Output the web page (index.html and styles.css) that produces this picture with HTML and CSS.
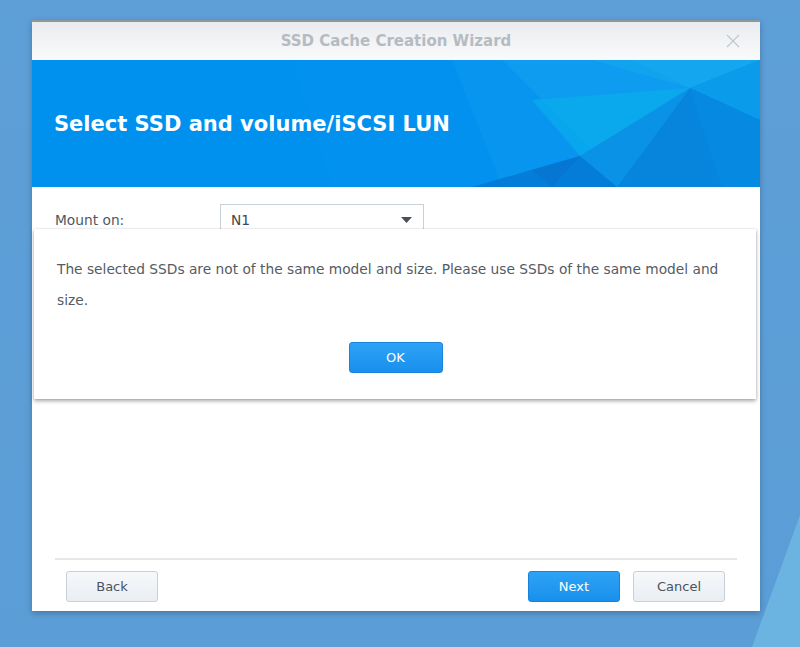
FILE: index.html
```html
<!DOCTYPE html>
<html>
<head>
<meta charset="utf-8">
<link rel="stylesheet" href="styles.css">
</head>
<body>
<div class="desktop">
  <svg class="desk-deco" width="800" height="647" viewBox="0 0 800 647">
    <polygon points="800,515 800,647 752,647" fill="#6bb4e1"/>
  </svg>
  <div class="window">
    <div class="titlebar">
      <span class="wtitle">SSD Cache Creation Wizard</span>
      <svg class="close" width="14" height="14" viewBox="0 0 14 14">
        <path d="M1 1 L13 13 M13 1 L1 13" stroke="#c3c8ce" stroke-width="1.4" fill="none"/>
      </svg>
    </div>
    <div class="banner">
      <svg class="facets" width="728" height="127" viewBox="0 0 728 127">
        <polygon points="260,0 420,0 470,127 300,127" fill="#0a95f0" opacity="0.35"/>
        <polygon points="420,0 560,0 658,28 570,127 470,127" fill="#0a96ef" opacity="0.8"/>
        <polygon points="560,0 728,0 658,28" fill="#14a6ee"/>
        <polygon points="470,0 600,0 658,28 560,90" fill="#10a2ee" opacity="0.6"/>
        <polygon points="500,40 658,28 548,96" fill="#08b2ec" opacity="0.6"/>
        <polygon points="658,28 728,0 728,60" fill="#0a9bea"/>
        <polygon points="658,28 728,60 728,127 690,127" fill="#0689e0"/>
        <polygon points="658,28 690,127 585,127" fill="#0785dc"/>
        <polygon points="548,96 658,28 585,127" fill="#0a93e6"/>
        <polygon points="440,127 548,96 585,127" fill="#0477d2" opacity="0.8"/>
        <polygon points="500,110 548,96 520,127" fill="#056fcc" opacity="0.5"/>
      </svg>
      <h1 class="btitle">Select SSD and volume/iSCSI LUN</h1>
    </div>
    <div class="content">
      <div class="row">
        <span class="label">Mount on:</span>
        <div class="select">
          <span>N1</span>
          <svg width="11" height="6" viewBox="0 0 11 6"><polygon points="0,0 11,0 5.5,6" fill="#4a5058"/></svg>
        </div>
      </div>
    </div>
    <div class="footer">
      <div class="sep"></div>
      <div class="buttons">
        <button class="btn">Back</button>
        <div class="right">
          <button class="btn primary">Next</button>
          <button class="btn">Cancel</button>
        </div>
      </div>
    </div>
    <div class="msgbox">
      <p class="msg">The selected SSDs are not of the same model and size. Please use SSDs of the same model and size.</p>
      <div class="msgbtns"><button class="btn primary ok">OK</button></div>
    </div>
  </div>
</div>
</body>
</html>
```
FILE: styles.css
```css
* { box-sizing: border-box; }
html, body { margin: 0; padding: 0; }
body {
  width: 800px; height: 647px; overflow: hidden;
  font-family: "DejaVu Sans", Verdana, sans-serif;
}
.desktop {
  position: relative;
  width: 800px; height: 647px;
  background: linear-gradient(180deg, #5e9fd8 0%, #5b9dd6 100%);
}
.desk-deco { position: absolute; left: 0; top: 0; }
.window {
  position: absolute;
  left: 32px; top: 20px;
  width: 728px; height: 591px;
  background: #fff;
  border-top: 2px solid #8d959d;
  box-shadow: 0 2px 6px rgba(0,0,0,0.25);
  display: flex; flex-direction: column;
}
.titlebar {
  height: 38px;
  background: linear-gradient(180deg, #e9ecef 0%, #f9fafb 100%);
  display: flex; align-items: center; justify-content: center;
  position: relative;
}
.wtitle {
  font-weight: bold; font-size: 15px; color: #b6bbc2;
}
.close { position: absolute; right: 20px; top: 12px; }
.banner {
  height: 127px;
  background: #0090ee;
  position: relative;
  overflow: hidden;
  display: flex; align-items: center;
}
.facets { position: absolute; left: 0; top: 0; }
.btitle {
  position: relative;
  margin: 0 0 0 22px;
  font-size: 21px; font-weight: bold; color: #fff;
}
.content { flex: 1; padding: 17px 0 0 23px; }
.row { display: flex; align-items: center; }
.label { width: 165px; font-size: 13.75px; color: #505860; }
.select {
  width: 204px; height: 32px;
  border: 1px solid #c8d0d8;
  display: flex; align-items: center; justify-content: space-between;
  padding: 0 11px 0 10px;
  font-size: 13.75px; color: #404850;
}
.footer { padding: 0 23px 9px 23px; }
.sep { height: 2px; background: #e5e8eb; margin-bottom: 11px; }
.buttons { display: flex; justify-content: space-between; padding: 0 12px 0 11px; }
.right { display: flex; gap: 13px; }
.btn {
  width: 92px; height: 31px;
  border: 1px solid #c6d0da;
  border-radius: 3px;
  background: linear-gradient(180deg, #f6f8fa 0%, #e9eef3 100%);
  font-family: "DejaVu Sans", Verdana, sans-serif;
  font-size: 13px; color: #4b525a;
  padding: 0;
}
.btn.primary {
  border-color: #1a82d8;
  background: linear-gradient(180deg, #2ea2f6 0%, #1890ec 100%);
  color: #fff;
}
.msgbox {
  position: absolute;
  left: 2px; top: 207px;
  width: 722px; height: 170px;
  background: #fff;
  box-shadow: 0 2px 4px rgba(0,0,0,0.35), 0 0 1px rgba(0,0,0,0.2);
  padding: 25px 23px 0 23px;
}
.msg {
  margin: 0;
  font-size: 13.75px; line-height: 31px; color: #555b62;
}
.msgbtns { display: flex; justify-content: center; margin-top: 26px; padding-left: 1px; }
.ok { width: 94px; }
```
